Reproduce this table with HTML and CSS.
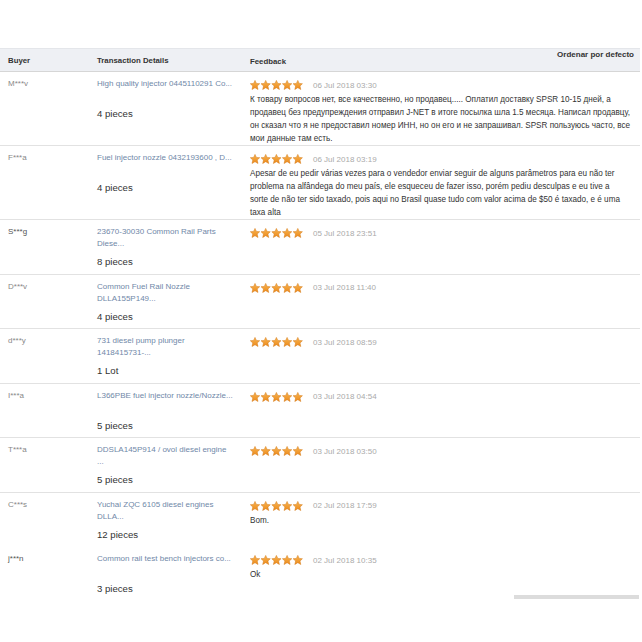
FILE: index.html
```html
<!DOCTYPE html>
<html>
<head>
<meta charset="utf-8">
<link rel="stylesheet" href="styles.css">
</head>
<body>
<svg class="defs" width="0" height="0">
  <defs>
    <linearGradient id="sg" x1="0" y1="0" x2="0" y2="1">
      <stop offset="0" stop-color="#f7b450"/>
      <stop offset="1" stop-color="#ec8a1c"/>
    </linearGradient>
    <symbol id="star" viewBox="0 0 10 10">
      <polygon points="5,0.4 6.4,3.4 9.7,3.7 7.2,6 8,9.5 5,7.7 2,9.5 2.8,6 0.3,3.7 3.6,3.4" fill="url(#sg)" stroke="#d47a18" stroke-width="0.5" stroke-linejoin="round"/>
    </symbol>
  </defs>
</svg>
<div class="page">
  <div class="table">
    <div class="head">
      <div class="h-buyer">Buyer</div>
      <div class="h-details">Transaction Details</div>
      <div class="h-feedback"><span>Feedback</span><span class="sort">Ordenar por defecto</span></div>
    </div>

    <div class="row">
      <div class="buyer">M***v</div>
      <div class="details"><div class="title">High quality injector 0445110291 Co...</div><div class="qty">4 pieces</div></div>
      <div class="feedback">
        <div class="meta"><svg class="stars" viewBox="0 0 53 10"><use href="#star" x="0" width="10" height="10"/><use href="#star" x="10.7" width="10" height="10"/><use href="#star" x="21.4" width="10" height="10"/><use href="#star" x="32.1" width="10" height="10"/><use href="#star" x="42.8" width="10" height="10"/></svg><span class="date">06 Jul 2018 03:30</span></div>
        <p class="text">К товару вопросов нет, все качественно, но продавец..... Оплатил доставку SPSR 10-15 дней, а<br>продавец без предупреждения отправил J-NET в итоге посылка шла 1.5 месяца. Написал продавцу,<br>он сказал что я не предоставил номер ИНН, но он его и не запрашивал. SPSR пользуюсь часто, все<br>мои данные там есть.</p>
      </div>
    </div>

    <div class="row">
      <div class="buyer">F***a</div>
      <div class="details"><div class="title">Fuel injector nozzle 0432193600 , D...</div><div class="qty">4 pieces</div></div>
      <div class="feedback">
        <div class="meta"><svg class="stars" viewBox="0 0 53 10"><use href="#star" x="0" width="10" height="10"/><use href="#star" x="10.7" width="10" height="10"/><use href="#star" x="21.4" width="10" height="10"/><use href="#star" x="32.1" width="10" height="10"/><use href="#star" x="42.8" width="10" height="10"/></svg><span class="date">06 Jul 2018 03:19</span></div>
        <p class="text">Apesar de eu pedir várias vezes para o vendedor enviar seguir de alguns parâmetros para eu não ter<br>problema na alfândega do meu país, ele esqueceu de fazer isso, porém pediu desculpas e eu tive a<br>sorte de não ter sido taxado, pois aqui no Brasil quase tudo com valor acima de $50 é taxado, e é uma<br>taxa alta</p>
      </div>
    </div>

    <div class="row">
      <div class="buyer dark">S***g</div>
      <div class="details"><div class="title">23670-30030 Common Rail Parts<br>Diese...</div><div class="qty">8 pieces</div></div>
      <div class="feedback">
        <div class="meta"><svg class="stars" viewBox="0 0 53 10"><use href="#star" x="0" width="10" height="10"/><use href="#star" x="10.7" width="10" height="10"/><use href="#star" x="21.4" width="10" height="10"/><use href="#star" x="32.1" width="10" height="10"/><use href="#star" x="42.8" width="10" height="10"/></svg><span class="date">05 Jul 2018 23:51</span></div>
      </div>
    </div>

    <div class="row">
      <div class="buyer">D***v</div>
      <div class="details"><div class="title">Common Fuel Rail Nozzle<br>DLLA155P149...</div><div class="qty">4 pieces</div></div>
      <div class="feedback">
        <div class="meta"><svg class="stars" viewBox="0 0 53 10"><use href="#star" x="0" width="10" height="10"/><use href="#star" x="10.7" width="10" height="10"/><use href="#star" x="21.4" width="10" height="10"/><use href="#star" x="32.1" width="10" height="10"/><use href="#star" x="42.8" width="10" height="10"/></svg><span class="date">03 Jul 2018 11:40</span></div>
      </div>
    </div>

    <div class="row">
      <div class="buyer">d***y</div>
      <div class="details"><div class="title">731 diesel pump plunger<br>1418415731-...</div><div class="qty">1 Lot</div></div>
      <div class="feedback">
        <div class="meta"><svg class="stars" viewBox="0 0 53 10"><use href="#star" x="0" width="10" height="10"/><use href="#star" x="10.7" width="10" height="10"/><use href="#star" x="21.4" width="10" height="10"/><use href="#star" x="32.1" width="10" height="10"/><use href="#star" x="42.8" width="10" height="10"/></svg><span class="date">03 Jul 2018 08:59</span></div>
      </div>
    </div>

    <div class="row">
      <div class="buyer">I***a</div>
      <div class="details"><div class="title">L366PBE fuel injector nozzle/Nozzle...</div><div class="qty">5 pieces</div></div>
      <div class="feedback">
        <div class="meta"><svg class="stars" viewBox="0 0 53 10"><use href="#star" x="0" width="10" height="10"/><use href="#star" x="10.7" width="10" height="10"/><use href="#star" x="21.4" width="10" height="10"/><use href="#star" x="32.1" width="10" height="10"/><use href="#star" x="42.8" width="10" height="10"/></svg><span class="date">03 Jul 2018 04:54</span></div>
      </div>
    </div>

    <div class="row">
      <div class="buyer">T***a</div>
      <div class="details"><div class="title">DDSLA145P914 / ovol diesel engine<br>...</div><div class="qty">5 pieces</div></div>
      <div class="feedback">
        <div class="meta"><svg class="stars" viewBox="0 0 53 10"><use href="#star" x="0" width="10" height="10"/><use href="#star" x="10.7" width="10" height="10"/><use href="#star" x="21.4" width="10" height="10"/><use href="#star" x="32.1" width="10" height="10"/><use href="#star" x="42.8" width="10" height="10"/></svg><span class="date">03 Jul 2018 03:50</span></div>
      </div>
    </div>

    <div class="row noline">
      <div class="buyer">C***s</div>
      <div class="details"><div class="title">Yuchai ZQC 6105 diesel engines<br>DLLA...</div><div class="qty">12 pieces</div></div>
      <div class="feedback">
        <div class="meta"><svg class="stars" viewBox="0 0 53 10"><use href="#star" x="0" width="10" height="10"/><use href="#star" x="10.7" width="10" height="10"/><use href="#star" x="21.4" width="10" height="10"/><use href="#star" x="32.1" width="10" height="10"/><use href="#star" x="42.8" width="10" height="10"/></svg><span class="date">02 Jul 2018 17:59</span></div>
        <p class="text">Bom.</p>
      </div>
    </div>

    <div class="row noline">
      <div class="buyer dark">j***n</div>
      <div class="details"><div class="title">Common rail test bench injectors co...</div><div class="qty">3 pieces</div></div>
      <div class="feedback">
        <div class="meta"><svg class="stars" viewBox="0 0 53 10"><use href="#star" x="0" width="10" height="10"/><use href="#star" x="10.7" width="10" height="10"/><use href="#star" x="21.4" width="10" height="10"/><use href="#star" x="32.1" width="10" height="10"/><use href="#star" x="42.8" width="10" height="10"/></svg><span class="date">02 Jul 2018 10:35</span></div>
        <p class="text">Ok</p>
      </div>
    </div>

    <div class="scrollbar"></div>
  </div>
</div>
</body>
</html>
```

FILE: styles.css
```css
html, body {
  margin: 0;
  padding: 0;
  background: #fff;
}
body {
  font-family: "Liberation Sans", Arial, sans-serif;
  color: #333;
}
.defs {
  position: absolute;
  width: 0;
  height: 0;
}
.page {
  padding-top: 48px;
}
.table {
  position: relative;
  width: 640px;
}
.head {
  display: grid;
  grid-template-columns: 97px 153px 1fr;
  height: 22px;
  background: #eef0f4;
  border-top: 1px solid #e4e6ea;
  border-bottom: 1px solid #d6d6d6;
  font-size: 7.8px;
  font-weight: bold;
  color: #333;
}
.head > div {
  display: flex;
  align-items: center;
}
.h-buyer {
  padding-left: 8px;
}
.h-feedback {
  justify-content: space-between;
  padding-right: 6px;
}
.h-feedback span:first-child {
  padding-top: 2px;
}
.sort {
  align-self: flex-start;
  margin-top: 1px;
  font-size: 8px;
}
.row {
  display: grid;
  grid-template-columns: 97px 153px 1fr;
  align-items: start;
  border-bottom: 1px solid #e2e2e2;
}
.row.noline {
  border-bottom-color: transparent;
}
.buyer {
  padding: 6px 0 0 8px;
  font-size: 8px;
  line-height: 12px;
  color: #888;
}
.buyer.dark {
  color: #555;
}
.details {
  padding: 6px 0 5.5px 0;
}
.title {
  height: 24px;
  font-size: 8px;
  line-height: 12px;
  color: #7088a8;
}
.qty {
  margin-top: 6px;
  font-size: 9.6px;
  line-height: 12px;
  color: #333;
}
.feedback {
  padding: 7px 0 0 0;
}
.meta {
  display: flex;
  align-items: center;
  height: 12px;
}
.stars {
  width: 53px;
  height: 10px;
  display: block;
}
.date {
  margin-left: 10px;
  font-size: 8px;
  color: #aaa;
}
.text {
  margin: 2px 0 0 0;
  font-size: 8.15px;
  line-height: 13px;
  color: #333;
  white-space: nowrap;
}
.scrollbar {
  position: absolute;
  right: 1px;
  bottom: 3px;
  width: 125px;
  height: 4px;
  background: #dcdcdc;
}
```
